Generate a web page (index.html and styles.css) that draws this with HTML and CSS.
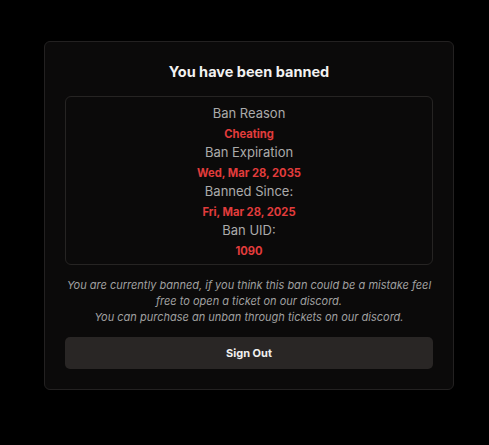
FILE: index.html
```html
<!DOCTYPE html>
<html>
<head>
<meta charset="utf-8">
<link rel="stylesheet" href="styles.css">
</head>
<body>
<div class="card">
  <h1 class="title">You have been banned</h1>
  <div class="info">
    <div class="label">Ban Reason</div>
    <div class="value">Cheating</div>
    <div class="label">Ban Expiration</div>
    <div class="value">Wed, Mar 28, 2035</div>
    <div class="label">Banned Since:</div>
    <div class="value">Fri, Mar 28, 2025</div>
    <div class="label">Ban UID:</div>
    <div class="value">1090</div>
  </div>
  <p class="note">You are currently banned, if you think this ban could be a mistake feel free to open a ticket on our discord.<br>You can purchase an unban through tickets on our discord.</p>
  <button class="signout">Sign Out</button>
</div>
</body>
</html>
```
FILE: styles.css
```css
html, body {
  margin: 0;
  padding: 0;
  background: #000;
}
body {
  font-family: Inter, "Noto Sans", sans-serif;
  padding-top: 41px;
  padding-left: 44px;
}
.card {
  width: 368px;
  padding: 20px;
  background: #0b0a0a;
  border: 1px solid #232121;
  border-radius: 6px;
  display: flex;
  flex-direction: column;
}
.title {
  margin: 0 0 14px;
  font-size: 14.5px;
  line-height: 20px;
  font-weight: 700;
  color: #f2f2f2;
  text-align: center;
}
.info {
  border: 1px solid #262423;
  border-radius: 6px;
  padding: 7px 0 4px;
  text-align: center;
}
.label {
  font-size: 13px;
  line-height: 18px;
  color: #ababab;
}
.value {
  margin-top: 4px;
  font-size: 11.2px;
  line-height: 17px;
  font-weight: 700;
  color: #e23c3c;
}
.note {
  margin: 12px 0 0;
  font-size: 11px;
  line-height: 16px;
  font-style: italic;
  color: #a0a0a0;
  text-align: center;
}
.signout {
  margin-top: 12px;
  height: 32px;
  border: none;
  border-radius: 5px;
  background: #292625;
  color: #f0f0f0;
  font-family: Inter, "Noto Sans", sans-serif;
  font-size: 11px;
  font-weight: 700;
}
```
